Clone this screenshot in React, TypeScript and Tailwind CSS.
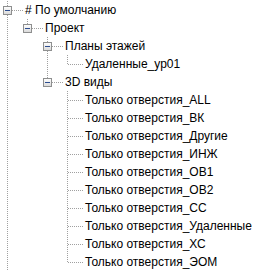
import React from "react";

type Row = {
  label: string;
  level: number;
  ancestorsHaveNext: boolean[];
  hasNext: boolean;
  expandable: boolean;
};

const only = [
  "ALL",
  "ВК",
  "Другие",
  "ИНЖ",
  "ОВ1",
  "ОВ2",
  "СС",
  "Удаленные",
  "ХС",
  "ЭОМ",
];

const rows: Row[] = [
  { label: "# По умолчанию", level: 0, ancestorsHaveNext: [], hasNext: true, expandable: true },
  { label: "Проект", level: 1, ancestorsHaveNext: [true], hasNext: false, expandable: true },
  { label: "Планы этажей", level: 2, ancestorsHaveNext: [true, false], hasNext: true, expandable: true },
  { label: "Удаленные_ур01", level: 3, ancestorsHaveNext: [true, false, true], hasNext: false, expandable: false },
  { label: "3D виды", level: 2, ancestorsHaveNext: [true, false], hasNext: false, expandable: true },
  ...only.map((s, i) => ({
    label: "Только отверстия_" + s,
    level: 3,
    ancestorsHaveNext: [true, false, false],
    hasNext: i < only.length - 1,
    expandable: false,
  })),
];

const LINE = "#a0a0a0";
const CX = 7.5;
const CY = 9.5;

function AncestorCell({ line }: { line: boolean }) {
  return (
    <svg width={20} height={18} className="shrink-0 block">
      {line && (
        <line x1={CX} y1={0} x2={CX} y2={18} stroke={LINE} strokeWidth={1} strokeDasharray="1 1" />
      )}
    </svg>
  );
}

function OwnCell({ hasNext, expandable }: { hasNext: boolean; expandable: boolean }) {
  return (
    <svg width={23} height={18} className="shrink-0 block">
      <defs>
        <linearGradient id="boxg" x1="0" y1="0" x2="0" y2="1">
          <stop offset="0" stopColor="#ffffff" />
          <stop offset="1" stopColor="#d8d8d8" />
        </linearGradient>
      </defs>
      <line x1={CX} y1={0} x2={CX} y2={hasNext ? 18 : 10} stroke={LINE} strokeWidth={1} strokeDasharray="1 1" />
      <line x1={8} y1={CY} x2={23} y2={CY} stroke={LINE} strokeWidth={1} strokeDasharray="1 1" />
      {expandable && (
        <g>
          <rect x={3.5} y={5.5} width={8} height={8} fill="url(#boxg)" stroke="#8e8f8f" strokeWidth={1} />
          <line x1={5} y1={CY} x2={10} y2={CY} stroke="#2c4d8f" strokeWidth={1} />
        </g>
      )}
    </svg>
  );
}

export default function App() {
  return (
    <div
      className="w-[266px] h-[272px] bg-white overflow-hidden pt-[1px]"
      style={{ fontFamily: '"Liberation Sans", Arial, sans-serif' }}
    >
      {rows.map((r, i) => (
        <div key={i} className="flex items-center h-[18px]">
          {r.ancestorsHaveNext.map((a, j) => (
            <AncestorCell key={j} line={a} />
          ))}
          <OwnCell hasNext={r.hasNext} expandable={r.expandable} />
          <span className="pl-[2px] text-[12px] leading-[18px] text-[#000] whitespace-nowrap">{r.label}</span>
        </div>
      ))}
    </div>
  );
}
